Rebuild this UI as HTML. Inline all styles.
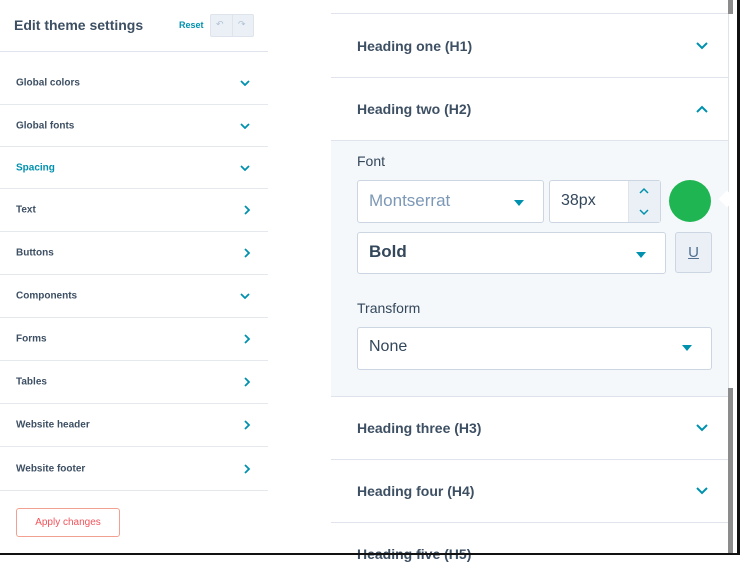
<!DOCTYPE html>
<html><head><style>
*{box-sizing:border-box;margin:0;padding:0}
body{width:740px;height:555px;overflow:hidden;background:#fff;font-family:"Liberation Sans",sans-serif;color:#33475b;position:relative}
.a{position:absolute}
.lrow{position:absolute;left:0;width:268px;border-bottom:1px solid #e5e9ee;font-size:10px;font-weight:bold;color:#3d4f63}
.lrow span{position:absolute;left:16px;top:50%;transform:translateY(-50%)}
.lrow svg{position:absolute;right:18px;top:50%;transform:translateY(-50%)}
.rrow{position:absolute;left:331px;width:397px;border-bottom:1px solid #dfe3eb;font-size:14px;font-weight:bold;color:#3d4f63}
.rrow span{position:absolute;left:26px;top:50%;transform:translateY(-50%)}
.rrow svg{position:absolute;right:20px;top:50%;transform:translateY(-50%)}
.box{position:absolute;background:#fff;border:1px solid #cbd6e2;border-radius:3px}
.tri{position:absolute;width:0;height:0;border-left:5px solid transparent;border-right:5px solid transparent;border-top:6px solid #0091ae}
</style></head><body>
<div class="a" style="left:0;top:0;width:268px;height:52px;border-bottom:1px solid #dfe3eb"></div>
<div class="a" style="left:14px;top:17px;font-size:14px;font-weight:bold;color:#3d4f63">Edit theme settings</div>
<div class="a" style="left:179px;top:20px;font-size:9px;font-weight:bold;color:#0091ae">Reset</div>
<div class="a" style="left:210px;top:14px;width:44px;height:23px;background:#eaf0f6;border:1px solid #dfe3eb;border-radius:2px"></div>
<div class="a" style="left:232px;top:14px;width:1px;height:23px;background:#dfe3eb"></div>
<div class="a" style="left:216px;top:19px;font-size:9px;color:#b0c1d4">↶</div>
<div class="a" style="left:238px;top:19px;font-size:9px;color:#b0c1d4">↷</div>

<div class="lrow" style="top:62px;height:43px"><span>Global colors</span><svg width="10" height="6"><path d="M1 1l4 4 4-4" stroke="#0091ae" stroke-width="1.8" fill="none"/></svg></div>
<div class="lrow" style="top:105px;height:42px"><span>Global fonts</span><svg width="10" height="6"><path d="M1 1l4 4 4-4" stroke="#0091ae" stroke-width="1.8" fill="none"/></svg></div>
<div class="lrow" style="top:147px;height:42px"><span style="color:#0091ae">Spacing</span><svg width="10" height="6"><path d="M1 1l4 4 4-4" stroke="#0091ae" stroke-width="1.8" fill="none"/></svg></div>
<div class="lrow" style="top:189px;height:43px"><span>Text</span><svg width="6" height="10"><path d="M1 1l4 4-4 4" stroke="#0091ae" stroke-width="1.8" fill="none"/></svg></div>
<div class="lrow" style="top:232px;height:43px"><span>Buttons</span><svg width="6" height="10"><path d="M1 1l4 4-4 4" stroke="#0091ae" stroke-width="1.8" fill="none"/></svg></div>
<div class="lrow" style="top:275px;height:43px"><span>Components</span><svg width="10" height="6"><path d="M1 1l4 4 4-4" stroke="#0091ae" stroke-width="1.8" fill="none"/></svg></div>
<div class="lrow" style="top:318px;height:43px"><span>Forms</span><svg width="6" height="10"><path d="M1 1l4 4-4 4" stroke="#0091ae" stroke-width="1.8" fill="none"/></svg></div>
<div class="lrow" style="top:361px;height:43px"><span>Tables</span><svg width="6" height="10"><path d="M1 1l4 4-4 4" stroke="#0091ae" stroke-width="1.8" fill="none"/></svg></div>
<div class="lrow" style="top:404px;height:43px"><span>Website header</span><svg width="6" height="10"><path d="M1 1l4 4-4 4" stroke="#0091ae" stroke-width="1.8" fill="none"/></svg></div>
<div class="lrow" style="top:447px;height:44px"><span>Website footer</span><svg width="6" height="10"><path d="M1 1l4 4-4 4" stroke="#0091ae" stroke-width="1.8" fill="none"/></svg></div>
<div class="a" style="left:16px;top:508px;width:104px;height:29px;border:1px solid #f2a191;border-radius:3px;color:#f2545b;font-size:10px;text-align:center;line-height:27px">Apply changes</div>

<div class="a" style="left:331px;top:0;width:397px;height:14px;border-bottom:1px solid #dfe3eb"></div>
<div class="rrow" style="top:14px;height:64px"><span>Heading one (H1)</span><svg width="12" height="8"><path d="M1 1l5 5 5-5" stroke="#0091ae" stroke-width="2" fill="none"/></svg></div>
<div class="rrow" style="top:78px;height:63px"><span>Heading two (H2)</span><svg width="12" height="8"><path d="M1 7l5-5 5 5" stroke="#0091ae" stroke-width="2" fill="none"/></svg></div>
<div class="a" style="left:331px;top:141px;width:397px;height:256px;background:#f5f8fa;border-bottom:1px solid #dfe3eb"></div>
<div class="a" style="left:357px;top:153px;font-size:14px">Font</div>
<div class="box" style="left:357px;top:180px;width:187px;height:43px"></div>
<div class="a" style="left:369px;top:191px;font-size:17px;color:#7c98b6">Montserrat</div>
<div class="tri" style="left:514px;top:200px"></div>
<div class="box" style="left:549px;top:180px;width:112px;height:43px"></div>
<div class="a" style="left:628px;top:181px;width:32px;height:41px;background:#eaf0f6;border-left:1px solid #dfe3eb"></div>
<div class="a" style="left:561px;top:192px;font-size:16px;color:#33475b">38px</div>
<svg class="a" style="left:639px;top:187px" width="10" height="30"><path d="M1 6l4-4 4 4M1 23l4 4 4-4" stroke="#0091ae" stroke-width="1.5" fill="none"/></svg>
<div class="a" style="left:669px;top:180px;width:42px;height:42px;border-radius:50%;background:#1fb553"></div>
<div class="box" style="left:357px;top:232px;width:309px;height:42px"></div>
<div class="a" style="left:369px;top:242px;font-size:17px;font-weight:bold">Bold</div>
<div class="tri" style="left:636px;top:252px"></div>
<div class="a" style="left:675px;top:232px;width:37px;height:41px;background:#eaf0f6;border:1px solid #cbd6e2;border-radius:3px;text-align:center;line-height:39px;font-size:15px;color:#516f90;text-decoration:underline">U</div>
<div class="a" style="left:357px;top:300px;font-size:14px">Transform</div>
<div class="box" style="left:357px;top:327px;width:355px;height:43px"></div>
<div class="a" style="left:369px;top:338px;font-size:16px">None</div>
<div class="tri" style="left:682px;top:345px"></div>
<div class="rrow" style="top:397px;height:63px"><span>Heading three (H3)</span><svg width="12" height="8"><path d="M1 1l5 5 5-5" stroke="#0091ae" stroke-width="2" fill="none"/></svg></div>
<div class="rrow" style="top:460px;height:63px"><span>Heading four (H4)</span><svg width="12" height="8"><path d="M1 1l5 5 5-5" stroke="#0091ae" stroke-width="2" fill="none"/></svg></div>
<div class="a" style="left:357px;top:546px;font-size:14px;font-weight:bold;color:#3d4f63">Heading five (H5)</div>

<div class="a" style="left:728px;top:0;width:5px;height:14px;background:#8c8c8c"></div>
<div class="a" style="left:728px;top:388px;width:5px;height:167px;background:#8c8c8c"></div>
<div class="a" style="left:728px;top:14px;width:9px;height:374px;background:#fff;border-left:1px solid #dfe3eb"></div>
<div class="a" style="left:721px;top:193px;width:12px;height:12px;background:#fff;transform:rotate(45deg)"></div>
<div class="a" style="left:737px;top:0;width:3px;height:555px;background:#111"></div>
<div class="a" style="left:0;top:553px;width:740px;height:2px;background:#111"></div>
</body></html>
